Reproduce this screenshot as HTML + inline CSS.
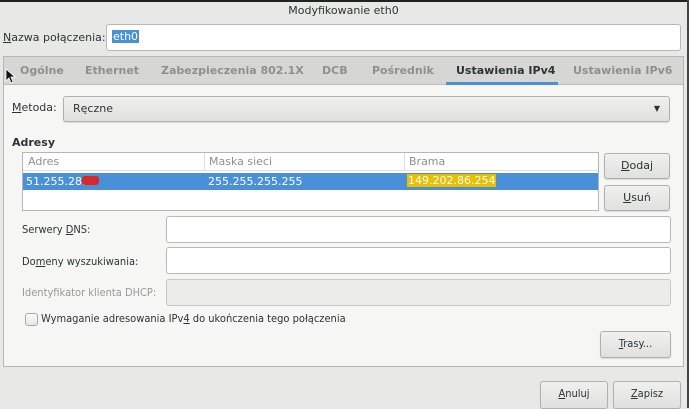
<!DOCTYPE html>
<html><head><meta charset="utf-8"><style>
*{margin:0;padding:0;box-sizing:border-box}
body{width:690px;height:408px;overflow:hidden;background:#e8e8e7;font-family:"DejaVu Sans","Liberation Sans",sans-serif;font-size:11px;color:#2e3436;position:relative}
.a{position:absolute}
.c{font-family:"DejaVu Sans Condensed","Liberation Sans Narrow","Liberation Sans",sans-serif}
.entry{position:absolute;background:#fff;border:1px solid #b8b8b6;border-radius:3px}
.btn{position:absolute;background:linear-gradient(#f0f0ef,#e0e0df);border:1px solid #b0b0ae;border-radius:3px;text-align:center;line-height:24px;box-shadow:0 1px 1px rgba(0,0,0,.12)}
.tab{position:absolute;top:64px;font-weight:bold;color:#8f8f8d;font-size:11px}
u{text-decoration:underline}
</style></head><body>
<div class="a" style="left:0;top:0;width:690px;height:2px;background:#222"></div>
<div class="a" style="left:687px;top:0;width:2px;height:408px;background:#444"></div>
<div class="a" style="left:689px;top:0;width:1px;height:408px;background:#fff"></div>
<div class="a" style="left:0;top:4px;width:687px;text-align:center;font-size:11px">Modyfikowanie eth0</div>
<div class="a" style="left:3px;top:31px"><u>N</u>azwa połączenia:</div>
<div class="entry" style="left:106px;top:24px;width:575px;height:27px"><span class="a" style="left:5px;top:5px;background:#4a90d9;color:#fff;padding:0 1px">eth0</span></div>
<div class="a" style="left:3px;top:56px;width:681px;height:311px;border:1px solid #b6b6b4;background:#f6f6f5"></div>
<div class="a" style="left:4px;top:57px;width:679px;height:28px;background:#d6d6d5;border-bottom:1px solid #bcbcba"></div>
<div class="tab" style="left:20px">Ogólne</div>
<div class="tab" style="left:85px">Ethernet</div>
<div class="tab" style="left:161px">Zabezpieczenia 802.1X</div>
<div class="tab" style="left:322px">DCB</div>
<div class="tab" style="left:372px">Pośrednik</div>
<div class="tab" style="left:456px;color:#2e3436">Ustawienia IPv4</div>
<div class="tab" style="left:573px">Ustawienia IPv6</div>
<div class="a" style="left:446px;top:82px;width:112px;height:3px;background:#4a90d9"></div>
<svg class="a" style="left:5px;top:68px" width="12" height="16"><path d="M1 1 L1 13 L4 10 L6 15 L8 14 L6 9 L10 9 Z" fill="#111" stroke="#fff" stroke-width=".8"/></svg>
<div class="a" style="left:12px;top:101px"><u>M</u>etoda:</div>
<div class="btn" style="left:63px;top:96px;width:607px;height:26px;text-align:left;padding-left:9px">Ręczne<span class="a" style="right:9px;top:0;font-size:8px">▼</span></div>
<div class="a" style="left:12px;top:136px;font-weight:bold">Adresy</div>
<div class="a" style="left:22px;top:152px;width:577px;height:59px;background:#fff;border:1px solid #b6b6b4"></div>
<div class="a" style="left:23px;top:153px;width:575px;height:18px;border-bottom:1px solid #ddd;color:#8f8f8d"><span class="a" style="left:5px;top:2px">Adres</span><span class="a" style="left:181px;top:0;width:1px;height:18px;background:#ddd"></span><span class="a" style="left:186px;top:2px">Maska sieci</span><span class="a" style="left:381px;top:0;width:1px;height:18px;background:#ddd"></span><span class="a" style="left:386px;top:2px">Brama</span></div>
<div class="a" style="left:23px;top:173px;width:575px;height:17px;background:#4a90d9;color:#fff"><span class="a" style="left:3px;top:2px">51.255.28..</span><span class="a" style="left:59px;top:3px;width:17px;height:9px;background:#d82828;border-radius:3px"></span><span class="a" style="left:185px;top:2px">255.255.255.255</span><span class="a" style="left:384px;top:1px;background:#e8c000;padding:0 1px">149.202.86.254</span></div>
<div class="btn" style="left:604px;top:153px;width:66px;height:26px"><u>D</u>odaj</div>
<div class="btn" style="left:604px;top:185px;width:66px;height:26px"><u>U</u>suń</div>
<div class="a c" style="left:22px;top:223px">Serwery <u>D</u>NS:</div>
<div class="entry" style="left:166px;top:216px;width:505px;height:27px"></div>
<div class="a c" style="left:22px;top:255px">Do<u>m</u>eny wyszukiwania:</div>
<div class="entry" style="left:166px;top:247px;width:505px;height:27px"></div>
<div class="a c" style="left:22px;top:286px;color:#999">Identyfikator klienta DHCP:</div>
<div class="entry" style="left:166px;top:279px;width:505px;height:27px;background:#ececeb;border-color:#c8c8c6"></div>
<div class="a" style="left:25px;top:313px;width:13px;height:13px;border:1px solid #a8a8a6;border-radius:3px;background:linear-gradient(#fafafa,#e6e6e6)"></div>
<div class="a c" style="left:41px;top:312px">Wymaganie adresowania IPv<u>4</u> do ukończenia tego połączenia</div>
<div class="btn c" style="left:600px;top:331px;width:71px;height:27px"><u>T</u>rasy...</div>
<div class="btn c" style="left:540px;top:381px;width:68px;height:28px"><u>A</u>nuluj</div>
<div class="btn c" style="left:613px;top:381px;width:68px;height:28px"><u>Z</u>apisz</div>
</body></html>
